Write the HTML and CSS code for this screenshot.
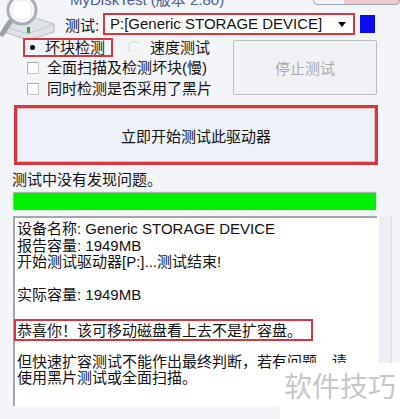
FILE: index.html
```html
<!DOCTYPE html>
<html lang="zh-CN">
<head>
  <meta charset="UTF-8" />
  <title>MyDiskTest</title>
  <link rel="stylesheet" href="styles.css">
</head>
<body>

  <!-- topo: logo, titulo e seletor de unidade -->
  <div class="top">
    <svg class="logo" width="62" height="40" viewBox="0 0 62 40">
      <path d="M4 26 L30 16 L54 24 L54 32 L28 40 L4 32 Z" fill="#dfe2e6" stroke="#b5bac2" stroke-width="1"/>
      <path d="M4 26 L28 34 L54 24" fill="none" stroke="#c2c6cc" stroke-width="1"/>
      <rect x="27" y="27" width="3" height="6" fill="#3a9a3a"/>
      <path d="M10 22 L2 34" stroke="#9aa0a8" stroke-width="5" stroke-linecap="round"/>
      <circle cx="22" cy="10" r="14" fill="#fbfcfd" stroke="#a9aeb6" stroke-width="3"/>
      <circle cx="22" cy="10" r="10" fill="#ffffff" stroke="#e3e6ea" stroke-width="1"/>
    </svg>
    <div class="top-main">
      <div class="caption">
        <span class="title">MyDiskTest (版本 2.80)</span>
        <span class="caption-btns"></span>
      </div>
      <div class="combo-row">
        <span class="combo-label">测试:</span>
        <div class="combo">
          <span>P:[Generic STORAGE DEVICE]</span>
          <span class="arrow"></span>
        </div>
        <span class="color-box"></span>
      </div>
    </div>
  </div>

  <div class="opts-row">
    <div class="opts">
      <div class="radio-row">
        <div class="radio marked">
          <span class="dot"></span>
          <span>坏块检测</span>
        </div>
        <div class="radio">
          <span class="ring"></span>
          <span>速度测试</span>
        </div>
      </div>
      <div class="check"><span class="box"></span>全面扫描及检测坏块(慢)</div>
      <div class="check"><span class="box"></span>同时检测是否采用了黑片</div>
    </div>
    <button class="stop" disabled>停止测试</button>
  </div>

  <button class="start">立即开始测试此驱动器</button>

  <div class="status">测试中没有发现问题。</div>
  <div class="progress"></div>

  <div class="log-row">
    <div class="log">
      <div>设备名称: Generic STORAGE DEVICE</div>
      <div>报告容量: 1949MB</div>
      <div>开始测试驱动器[P:]...测试结束!</div>
      <div>&nbsp;</div>
      <div>实际容量: 1949MB</div>
      <div class="result">恭喜你！该可移动磁盘看上去不是扩容盘。</div>
      <div>但快速扩容测试不能作出最终判断，若有问题，请</div>
      <div>使用黑片测试或全面扫描。</div>
    </div>
    <div class="scroll"></div>
  </div>

  <!-- marca d'agua por cima do texto -->
  <div class="watermark">软件技巧</div>

</body>
</html>
```

FILE: styles.css
```css
:root {
  --fundo: #f4f5f9;
  --vermelho: #d6363d;
  --cinza: #a4a7ad;
}

* {
  box-sizing: border-box;
}

body {
  margin: 0;
  width: 400px;
  height: 419px;
  overflow: hidden;
  position: relative;
  background-color: var(--fundo);
  font-family: "Liberation Sans", "Noto Sans CJK SC", sans-serif;
  font-size: 15px;
  color: #111;
}

.top {
  display: flex;
  height: 37px;
}

.logo {
  flex: none;
  display: block;
}

.top-main {
  flex: 1;
  display: flex;
  flex-direction: column;
}

.caption {
  height: 12px;
  display: flex;
  justify-content: space-between;
  overflow: hidden;
}

.caption .title {
  margin-left: 8px;
  margin-top: -9px;
  font-size: 15px;
  line-height: 18px;
  color: #4b5b96;
}

.caption-btns {
  width: 87px;
  height: 18px;
  margin-top: -13px;
  border: 1px solid #9ba3b4;
  border-radius: 0 0 4px 4px;
  background: linear-gradient(to right, #f3f4f8 35%, #eecaca 36%);
}

.combo-row {
  display: flex;
  align-items: center;
  height: 24px;
}

.combo-label {
  margin-left: 3px;
  width: 38px;
}

.combo {
  width: 252px;
  height: 22px;
  border: 2px solid var(--vermelho);
  background-color: #fff;
  display: flex;
  align-items: center;
  padding-left: 5px;
  line-height: 18px;
}

.arrow {
  margin-left: auto;
  margin-right: 7px;
  border-left: 4px solid transparent;
  border-right: 4px solid transparent;
  border-top: 5px solid #000;
}

.color-box {
  width: 15px;
  height: 18px;
  margin-left: 5px;
  background-color: #0b0bf2;
}

.opts-row {
  display: flex;
  margin-top: 1px;
}

.opts {
  width: 233px;
  padding-left: 23px;
}

.radio-row {
  display: flex;
  height: 19px;
  align-items: center;
}

.radio {
  display: flex;
  align-items: center;
  height: 19px;
  line-height: 16px;
}

.radio.marked {
  width: 90px;
  border: 2px solid var(--vermelho);
  padding-left: 5px;
}

.dot {
  width: 5px;
  height: 5px;
  border-radius: 50%;
  background-color: #000;
  margin-right: 10px;
}

.ring {
  width: 13px;
  height: 13px;
  border-radius: 50%;
  border: 1px solid #d0d3d8;
  border-right-color: transparent;
  border-bottom-color: transparent;
  margin-left: 15px;
  margin-right: 9px;
}

.check {
  display: flex;
  align-items: center;
  height: 20px;
  margin-top: 1px;
  padding-left: 4px;
  line-height: 16px;
}

.check .box {
  width: 12px;
  height: 12px;
  background-color: #fff;
  border: 1px solid #c3c6cb;
  border-top-color: #a9acb2;
  border-left-color: #a9acb2;
  margin-right: 8px;
}

.stop {
  width: 144px;
  height: 55px;
  margin-top: 2px;
  border: 1px solid #b7bbc3;
  border-radius: 2px;
  background-color: #f1f2f6;
  color: #a9a9ab;
  font: inherit;
}

.start {
  display: block;
  width: 364px;
  height: 60px;
  margin: 6px 0 0 14px;
  border: 3px solid var(--vermelho);
  box-shadow: inset 0 0 0 1px #e7b9bc;
  background-color: #eef0f8;
  color: #111;
  font: inherit;
}

.status {
  margin: 7px 0 0 12px;
  line-height: 16px;
}

.progress {
  width: 363px;
  height: 18px;
  margin: 4px 0 0 13px;
  border-top: 1px solid #b0b3b0;
  border-left: 1px solid #b0b3b0;
  background-color: #00f000;
  box-shadow: 0 0 2px #9cf59c;
}

.log-row {
  display: flex;
  margin: 6px 0 0 13px;
}

.log {
  width: 364px;
  height: 190px;
  border-top: 2px solid var(--cinza);
  border-left: 2px solid var(--cinza);
  background-color: #fff;
  padding: 3px 0 0 2px;
  line-height: 16.5px;
}

.log .result {
  width: 299px;
  margin: 15px 0 13px -3px;
  padding: 1px 0 0 1px;
  border: 2px solid var(--vermelho);
  line-height: 17px;
}

.scroll {
  width: 15px;
  height: 190px;
  background-color: #eceef5;
  border-left: 2px solid #fbfbfd;
  border-right: 1px solid #d9dce4;
}

.watermark {
  position: absolute;
  right: 0;
  bottom: 0;
  width: 120px;
  height: 56px;
  padding-left: 4px;
  background-color: #fff;
  color: #c7c7c7;
  font-family: "Noto Sans CJK SC", sans-serif;
  font-size: 28px;
  line-height: 44px;
}
```
